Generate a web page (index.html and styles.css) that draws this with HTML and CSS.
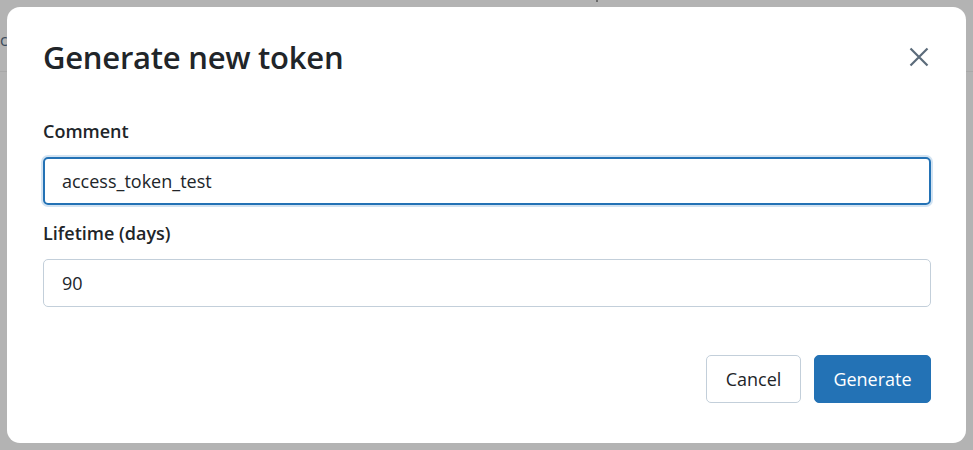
FILE: index.html
```html
<!DOCTYPE html>
<html lang="en">
<head>
<meta charset="utf-8">
<title>Generate new token</title>
<link rel="stylesheet" href="styles.css">
</head>
<body>
<div class="backdrop">
  <div class="page-bg">
    <span class="bg-char">c</span>
    <span class="bg-dot"></span>
    <div class="bg-line"></div>
  </div>
  <div class="modal">
    <div class="modal-header">
      <h2 class="modal-title">Generate new token</h2>
      <button class="close-btn" aria-label="Close">
        <svg width="20" height="20" viewBox="0 0 20 20"><path d="M1.5 1.5 L18.5 18.5 M18.5 1.5 L1.5 18.5" stroke="#5b6b7a" stroke-width="2.2" fill="none"/></svg>
      </button>
    </div>
    <div class="modal-body">
      <label class="field-label">Comment</label>
      <div class="input focused">access_token_test</div>
      <label class="field-label second">Lifetime (days)</label>
      <div class="input">90</div>
    </div>
    <div class="modal-footer">
      <button class="btn btn-outline">Cancel</button>
      <button class="btn btn-primary">Generate</button>
    </div>
  </div>
</div>
</body>
</html>
```
FILE: styles.css
```css
html, body {
  margin: 0;
  padding: 0;
}
body {
  width: 973px;
  height: 450px;
  background: #b3b3b3;
  font-family: "Open Sans", "Noto Sans", sans-serif;
  color: #212529;
  overflow: hidden;
}
.backdrop {
  position: relative;
  width: 973px;
  height: 450px;
}
.page-bg {
  position: absolute;
  inset: 0;
}
.bg-char {
  position: absolute;
  left: 0;
  top: 29px;
  font-size: 16px;
  color: #3a4a5a;
}
.bg-dot {
  position: absolute;
  left: 596px;
  top: 0;
  width: 2px;
  height: 2px;
  background: #6a6a6a;
}
.bg-line {
  position: absolute;
  left: 0;
  right: 0;
  top: 71px;
  height: 1px;
  background: #a8a8a8;
}
.modal {
  position: absolute;
  left: 7px;
  top: 7px;
  width: 959px;
  height: 436px;
  box-sizing: border-box;
  background: #fff;
  border-radius: 13px;
  padding: 0 35px 0 36px;
  display: flex;
  flex-direction: column;
}
.modal-header {
  display: flex;
  align-items: center;
  justify-content: space-between;
  height: 100px;
}
.modal-title {
  margin: 0;
  font-size: 31px;
  font-weight: 600;
  letter-spacing: -0.25px;
  line-height: 1;
  color: #212529;
}
.close-btn {
  border: 0;
  background: none;
  padding: 0;
  margin-right: 2px;
  width: 20px;
  height: 20px;
  display: flex;
}
.modal-body {
  display: flex;
  flex-direction: column;
}
.field-label {
  font-size: 18px;
  font-weight: 600;
  line-height: 24px;
  margin-top: 12px;
  margin-bottom: 14px;
}
.field-label.second {
  margin-top: 16px;
  margin-bottom: 14px;
}
.input {
  height: 48px;
  box-sizing: border-box;
  border: 1px solid #c3cfda;
  border-radius: 5px;
  padding: 0 18px;
  font-size: 18px;
  display: flex;
  align-items: center;
}
.input.focused {
  border: 2px solid #2372b5;
  padding: 0 17px;
  box-shadow: 0 0 0 2px #d2e3f2;
}
.modal-footer {
  display: flex;
  justify-content: flex-end;
  gap: 13px;
  margin-top: 48px;
}
.btn {
  height: 48px;
  box-sizing: border-box;
  font-family: inherit;
  font-size: 18px;
  border-radius: 5px;
  padding: 0;
}
.btn-outline {
  background: #fff;
  border: 1px solid #c3cfda;
  color: #212529;
  width: 95px;
}
.btn-primary {
  background: #2372b5;
  border: 1px solid #2372b5;
  color: #fff;
  width: 117px;
}
```
